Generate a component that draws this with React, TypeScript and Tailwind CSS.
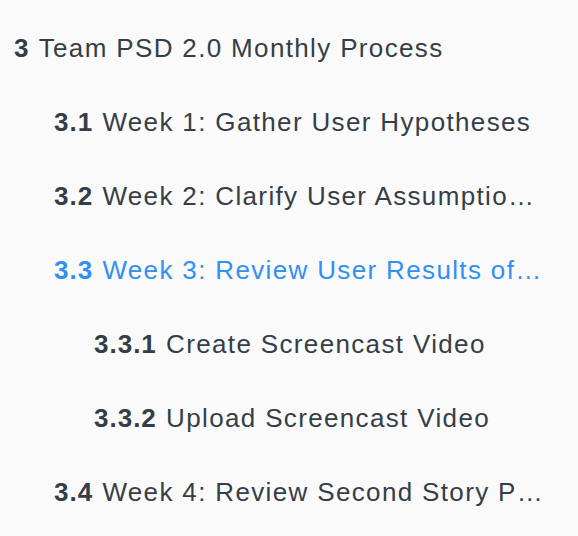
import React from "react";

type Item = { num: string; title: string; level: number; active?: boolean };

const items: Item[] = [
  { num: "3", title: "Team PSD 2.0 Monthly Process", level: 0 },
  { num: "3.1", title: "Week 1: Gather User Hypotheses", level: 1 },
  { num: "3.2", title: "Week 2: Clarify User Assumptions and Goals", level: 1 },
  { num: "3.3", title: "Week 3: Review User Results of Testing", level: 1, active: true },
  { num: "3.3.1", title: "Create Screencast Video", level: 2 },
  { num: "3.3.2", title: "Upload Screencast Video", level: 2 },
  { num: "3.4", title: "Week 4: Review Second Story Prototype", level: 1 },
];

const indent = ["pl-[14px]", "pl-[54px]", "pl-[94px]"];

export default function App() {
  return (
    <div
      className="w-[578px] h-[536px] bg-[#fafafa] pt-[11px] pr-[30px] overflow-hidden"
      style={{ fontFamily: '"Liberation Sans", Arial, sans-serif' }}
    >
      <ul className="flex flex-col">
        {items.map((it) => (
          <li
            key={it.num}
            className={`h-[74px] flex items-center ${indent[it.level]} ${
              it.active ? "text-[#3190f0]" : "text-[#353e47]"
            }`}
          >
            <span className="block truncate text-[26px] leading-[30px] min-w-0">
              <span className="font-bold tracking-[1px] pr-[2px]">{it.num}</span>{" "}
              <span className="tracking-[1.35px]">{it.title}</span>
            </span>
          </li>
        ))}
      </ul>
    </div>
  );
}
